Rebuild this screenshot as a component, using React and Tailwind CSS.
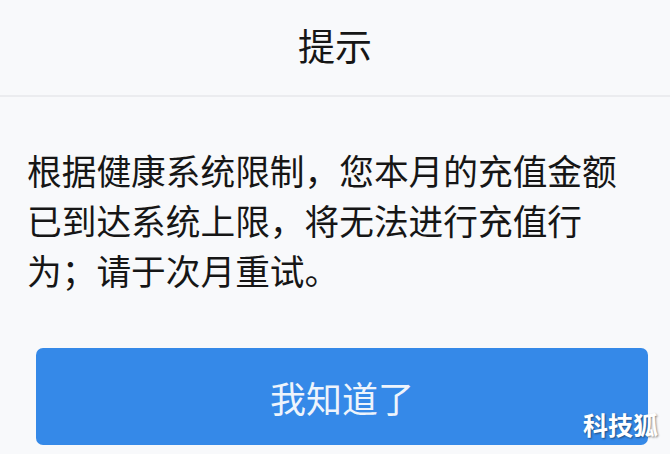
import React from 'react';

// 充值限额提示弹窗
function App() {
  return (
    <div className="relative w-[670px] h-[454px] overflow-hidden bg-[#f8f9fb] font-['Noto_Sans_CJK_SC',sans-serif] text-[#161616]">
      <div className="h-[97px] flex items-center justify-center border-b-2 border-[#ebecef]">
        <h1 className="text-[37px] leading-none pb-[4px]">提示</h1>
      </div>

      <p className="px-[27px] pt-[48px] text-[34.7px] leading-[50px]">
        根据健康系统限制，您本月的充值金额已到达系统上限，将无法进行充值行为；请于次月重试。
      </p>

      <div className="pl-[36px] pr-[22px] pt-[53px]">
        <button className="w-full h-[97px] rounded-[7px] bg-[#3589e8] text-[#eef4fc] text-[36px] leading-none">
          我知道了
        </button>
      </div>

      <span className="absolute right-[12px] bottom-[17px] text-[25px] leading-none font-bold text-white [text-shadow:1px_1px_2px_rgba(0,0,0,0.45)]">
        科技狐
      </span>
    </div>
  );
}

export default App;
